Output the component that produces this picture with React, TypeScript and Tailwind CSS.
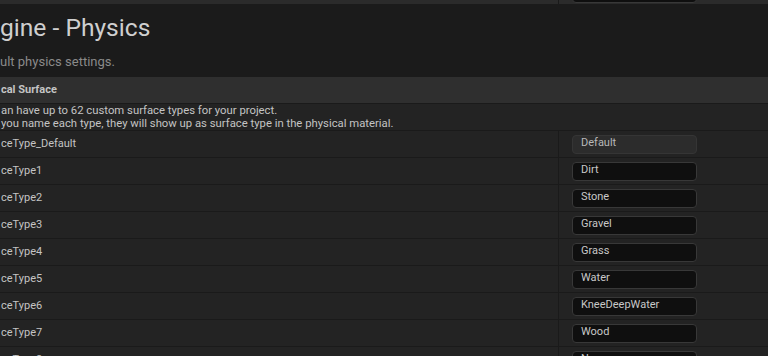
import React from "react";

// Surface type rows shown in the physics settings panel
const rows = [
  { label: "ceType_Default", value: "Default", disabled: true },
  { label: "ceType1", value: "Dirt" },
  { label: "ceType2", value: "Stone" },
  { label: "ceType3", value: "Gravel" },
  { label: "ceType4", value: "Grass" },
  { label: "ceType5", value: "Water" },
  { label: "ceType6", value: "KneeDeepWater" },
  { label: "ceType7", value: "Wood" },
  { label: "ceType8", value: "None" },
];

const ValueBox = ({ value, disabled }: any) => (
  <div
    className={
      disabled
        ? "flex h-[19px] w-[125px] items-center rounded-[4px] border border-[#353535] bg-[#2c2c2c] pb-[1px] pl-[8px] text-[11px] text-[#b8b8b8]"
        : "flex h-[19px] w-[125px] items-center rounded-[4px] border border-[#383838] bg-[#0f0f0f] pb-[1px] pl-[8px] text-[11px] text-[#c8c8c8]"
    }
  >
    {value}
  </div>
);

export default function App() {
  return (
    <div
      className="h-[356px] w-[768px] overflow-hidden bg-[#1b1b1b]"
      style={{ fontFamily: "Roboto, 'Noto Sans', sans-serif" }}
    >
      {/* tail of the previous row, scrolled mostly off the top */}
      <div className="flex h-[5px] overflow-hidden border-b border-[#1b1b1b] bg-[#2b2b2b]">
        <div className="w-[559px] border-r border-[#1a1a1a]" />
        <div className="pl-[13px]">
          <div className="-mt-[16px] h-[19px] w-[125px] rounded-[4px] border border-[#383838] bg-[#0f0f0f]" />
        </div>
      </div>

      {/* page header */}
      <div className="flex h-[72px] flex-col pt-[6px]">
        <div className="text-[24.6px] leading-[34px] text-[#cfcfcf]">gine - Physics</div>
        <div className="mt-[9px] text-[13px] leading-[16px] text-[#8a8a8a]">ult physics settings.</div>
      </div>

      {/* category header */}
      <div className="flex h-[27px] items-center border-b border-[#1a1a1a] bg-[#2f2f2f] pl-[1px] text-[11px] font-bold text-[#c4c4c4]">
        cal Surface
      </div>

      {/* category description */}
      <div className="flex h-[27px] flex-col justify-center border-b border-[#1a1a1a] bg-[#232323] pl-[1px] text-[11.3px] leading-[13px] text-[#c4c4c4]">
        <div>an have up to 62 custom surface types for your project.</div>
        <div>you name each type, they will show up as surface type in the physical material.</div>
      </div>

      {rows.map((row) => (
        <div key={row.label} className="flex h-[27px] border-b border-[#1a1a1a] bg-[#232323]">
          <div className="flex w-[559px] items-center border-r border-[#1a1a1a] pl-[1px] text-[11px] text-[#c4c4c4]">
            {row.label}
          </div>
          <div className="flex items-center pl-[13px]">
            <ValueBox value={row.value} disabled={row.disabled} />
          </div>
        </div>
      ))}
    </div>
  );
}
